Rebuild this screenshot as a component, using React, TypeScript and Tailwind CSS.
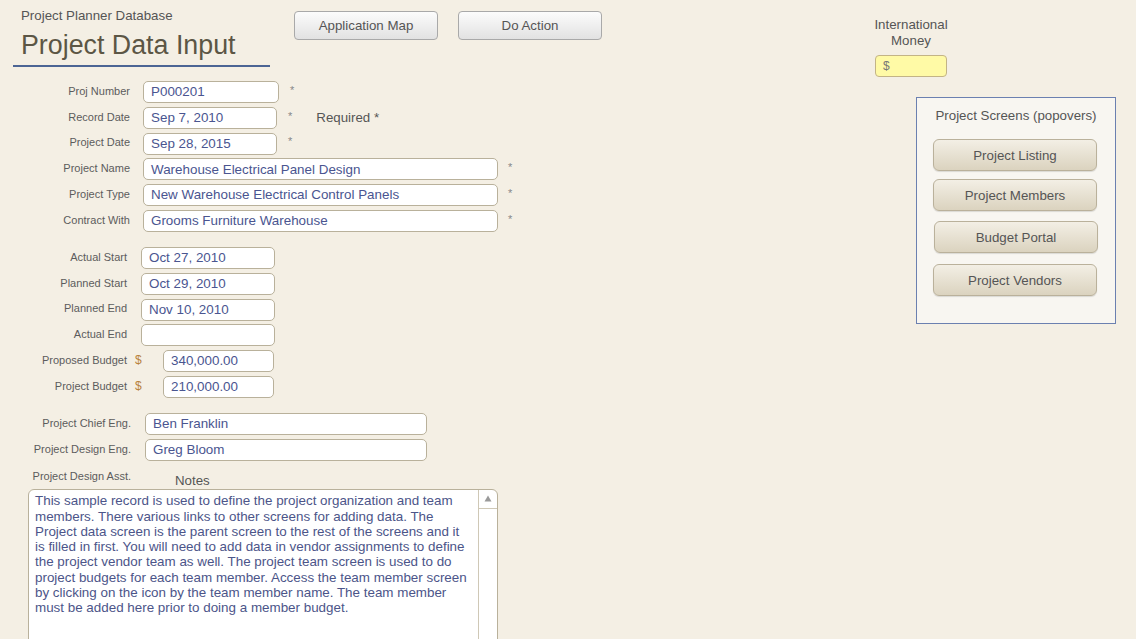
import React from 'react';

const FONT = { fontFamily: '"Liberation Sans", Arial, sans-serif' };

const NOTES = [
  'This sample record is used to define the project organization and team',
  'members. There various links to other screens for adding data. The',
  'Project data screen is the parent screen to the rest of the screens and it',
  'is filled in first. You will need to add data in vendor assignments to define',
  'the project vendor team as well. The project team screen is used to do',
  'project budgets for each team member. Access the team member screen',
  'by clicking on the icon by the team member name. The team member',
  'must be added here prior to doing a member budget.',
];

function Field({ value, w }: { value?: string; w: string }) {
  return (
    <div
      className={`${w} h-[22px] shrink-0 bg-white border border-[#b9b19b] rounded-[5px] pl-[7px] flex items-center text-[13.4px] text-[#4a5590] leading-none`}
    >
      {value}
    </div>
  );
}

function Label({ text, w }: { text: string; w: string }) {
  return <div className={`${w} shrink-0 text-right text-[11px] text-[#5c5c5c] -mt-[2px]`}>{text}</div>;
}

function Star({ ml }: { ml: string }) {
  return <span className={`${ml} text-[11px] text-[#888] -mt-[4px]`}>*</span>;
}

function PanelButton({ label, cls }: { label: string; cls: string }) {
  return (
    <button
      className={`${cls} w-[164px] h-[32px] pt-[1px] rounded-[6px] border border-[#bab19b] bg-gradient-to-b from-[#f3efe5] to-[#dbd3bf] shadow-[0_1px_1px_rgba(0,0,0,0.12)] text-[13.3px] text-[#555]`}
    >
      {label}
    </button>
  );
}

export default function App() {
  return (
    <div style={FONT} className="w-[1136px] h-[639px] overflow-hidden bg-[#f4efe4] flex">
      {/* Left: header + form */}
      <div className="w-[860px] shrink-0 flex flex-col">
        {/* Header */}
        <div className="flex items-start">
          <div className="ml-[13px] w-[257px] pt-[7.5px] border-b-2 border-[#4c6594] pb-[3px]">
            <div className="pl-[8px] text-[13.3px] leading-[16px] text-[#555]">Project Planner Database</div>
            <div className="pl-[8px] mt-[4.5px] text-[26.8px] leading-[34px] text-[#5c5645]">Project Data Input</div>
          </div>
          <button className="ml-[24px] mt-[11px] w-[144px] h-[29px] pt-[1px] rounded-[4px] border border-[#a9a9a9] bg-gradient-to-b from-[#fcfcfc] to-[#e2e2e2] text-[13.3px] text-[#555]">
            Application Map
          </button>
          <button className="ml-[20px] mt-[11px] w-[144px] h-[29px] pt-[1px] rounded-[4px] border border-[#a9a9a9] bg-gradient-to-b from-[#fcfcfc] to-[#e2e2e2] text-[13.3px] text-[#555]">
            Do Action
          </button>
        </div>

        {/* Group 1 */}
        <div className="mt-[14px] flex flex-col gap-[3.8px]">
          <div className="flex items-center h-[22px]">
            <Label text="Proj Number" w="w-[130px]" />
            <div className="ml-[13px]"><Field value="P000201" w="w-[136px]" /></div>
            <Star ml="ml-[11px]" />
          </div>
          <div className="flex items-center h-[22px]">
            <Label text="Record Date" w="w-[130px]" />
            <div className="ml-[13px]"><Field value="Sep 7, 2010" w="w-[134px]" /></div>
            <Star ml="ml-[11px]" />
            <span className="ml-[24px] text-[13.3px] text-[#555]">Required *</span>
          </div>
          <div className="flex items-center h-[22px]">
            <Label text="Project Date" w="w-[130px]" />
            <div className="ml-[13px]"><Field value="Sep 28, 2015" w="w-[134px]" /></div>
            <Star ml="ml-[11px]" />
          </div>
          <div className="flex items-center h-[22px]">
            <Label text="Project Name" w="w-[130px]" />
            <div className="ml-[13px]"><Field value="Warehouse Electrical Panel Design" w="w-[355px]" /></div>
            <Star ml="ml-[10px]" />
          </div>
          <div className="flex items-center h-[22px]">
            <Label text="Project Type" w="w-[130px]" />
            <div className="ml-[13px]"><Field value="New Warehouse Electrical Control Panels" w="w-[355px]" /></div>
            <Star ml="ml-[10px]" />
          </div>
          <div className="flex items-center h-[22px]">
            <Label text="Contract With" w="w-[130px]" />
            <div className="ml-[13px]"><Field value="Grooms Furniture Warehouse" w="w-[355px]" /></div>
            <Star ml="ml-[10px]" />
          </div>
        </div>

        {/* Group 2 */}
        <div className="mt-[15px] flex flex-col gap-[3.8px]">
          {[
            ['Actual Start', 'Oct 27, 2010'],
            ['Planned Start', 'Oct 29, 2010'],
            ['Planned End', 'Nov 10, 2010'],
            ['Actual End', ''],
          ].map(([l, v]) => (
            <div key={l} className="flex items-center h-[22px]">
              <Label text={l} w="w-[127px]" />
              <div className="ml-[14px]"><Field value={v} w="w-[134px]" /></div>
            </div>
          ))}
          {[
            ['Proposed Budget', '340,000.00'],
            ['Project Budget', '210,000.00'],
          ].map(([l, v]) => (
            <div key={l} className="flex items-center h-[22px]">
              <Label text={l} w="w-[127px]" />
              <span className="ml-[8px] w-[7px] text-[12px] text-[#b8823c] -mt-[2px]">$</span>
              <div className="ml-[21px]"><Field value={v} w="w-[111px]" /></div>
            </div>
          ))}
        </div>

        {/* Group 3 */}
        <div className="mt-[15px] flex flex-col gap-[3.8px]">
          <div className="flex items-center h-[22px]">
            <Label text="Project Chief Eng." w="w-[131px]" />
            <div className="ml-[14px]"><Field value="Ben Franklin" w="w-[282px]" /></div>
          </div>
          <div className="flex items-center h-[22px]">
            <Label text="Project Design Eng." w="w-[131px]" />
            <div className="ml-[14px]"><Field value="Greg Bloom" w="w-[282px]" /></div>
          </div>
        </div>
        <div className="mt-[4px] flex items-start h-[26px]">
          <div className="w-[131px] text-right text-[11px] text-[#5c5c5c] pt-[3px]">Project Design Asst.</div>
          <div className="ml-[44px] pt-[8px] text-[13.3px] leading-[16px] text-[#555]">Notes</div>
        </div>

        {/* Notes */}
        <div className="ml-[28px] w-[470px] h-[160px] shrink-0 bg-white border border-[#b9b19b] rounded-t-[6px] flex overflow-hidden">
          <div className="flex-1 pl-[6px] pt-[3.5px] text-[13.4px] leading-[15.3px] text-[#4c5589] whitespace-nowrap">
            {NOTES.map((line) => (
              <div key={line}>{line}</div>
            ))}
          </div>
          <div className="w-[19px] border-l border-[#cfc8b6] flex flex-col">
            <div className="h-[19px] border-b border-[#cfc8b6] flex items-center justify-center">
              <svg width="8" height="7" viewBox="0 0 8 7">
                <path d="M4 0.5 L7.5 6.5 L0.5 6.5 Z" fill="#9a9a9a" />
              </svg>
            </div>
          </div>
        </div>
      </div>

      {/* Right column */}
      <div className="flex flex-col">
        <div className="w-[102px] pt-[17px] text-center text-[13.3px] leading-[15.5px] text-[#555]">
          International
          <br />
          Money
        </div>
        <div className="ml-[15px] mt-[7px] w-[72px] h-[22px] bg-[#fffaa6] border border-[#c3b486] rounded-[4px] pl-[7px] flex items-center text-[12px] text-[#777]">
          $
        </div>
        <div className="ml-[56px] mt-[20px] w-[200px] h-[227px] border border-[#6b80b0] bg-[#f8f6f1] flex flex-col">
          <div className="pt-[10px] text-center text-[13.3px] leading-[16px] text-[#555]">Project Screens (popovers)</div>
          <PanelButton label="Project Listing" cls="ml-[16px] mt-[15px]" />
          <PanelButton label="Project Members" cls="ml-[16px] mt-[8px]" />
          <PanelButton label="Budget Portal" cls="ml-[17px] mt-[10px]" />
          <PanelButton label="Project Vendors" cls="ml-[16px] mt-[11px]" />
        </div>
      </div>
    </div>
  );
}
